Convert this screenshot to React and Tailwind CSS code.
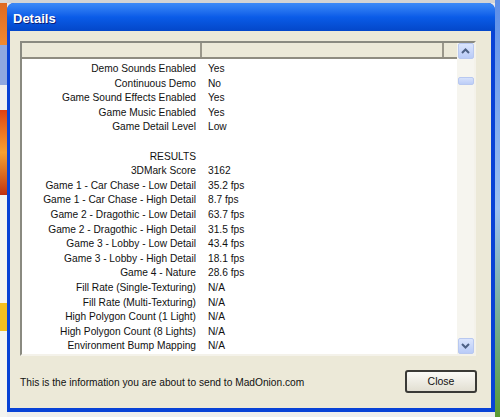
import React from 'react';

const rows = [
  ['Demo Sounds Enabled', 'Yes'],
  ['Continuous Demo', 'No'],
  ['Game Sound Effects Enabled', 'Yes'],
  ['Game Music Enabled', 'Yes'],
  ['Game Detail Level', 'Low'],
  ['', ''],
  ['RESULTS', ''],
  ['3DMark Score', '3162'],
  ['Game 1 - Car Chase - Low Detail', '35.2 fps'],
  ['Game 1 - Car Chase - High Detail', '8.7 fps'],
  ['Game 2 - Dragothic - Low Detail', '63.7 fps'],
  ['Game 2 - Dragothic - High Detail', '31.5 fps'],
  ['Game 3 - Lobby - Low Detail', '43.4 fps'],
  ['Game 3 - Lobby - High Detail', '18.1 fps'],
  ['Game 4 - Nature', '28.6 fps'],
  ['Fill Rate (Single-Texturing)', 'N/A'],
  ['Fill Rate (Multi-Texturing)', 'N/A'],
  ['High Polygon Count (1 Light)', 'N/A'],
  ['High Polygon Count (8 Lights)', 'N/A'],
  ['Environment Bump Mapping', 'N/A'],
];

const ScrollButton = ({ up }) => (
  <div className="w-[16px] h-[16px] rounded-[2px] border border-[#b8c8f0] bg-gradient-to-b from-[#dbe5fd] to-[#b9cbf7] flex items-center justify-center">
    <svg width="9" height="6" viewBox="0 0 9 6">
      <path
        d={up ? 'M1 5 L4.5 1.5 L8 5' : 'M1 1 L4.5 4.5 L8 1'}
        fill="none"
        stroke="#4d6185"
        strokeWidth="2"
      />
    </svg>
  </div>
);

const App = () => {
  return (
    <div
      className="w-[500px] h-[417px] overflow-hidden flex bg-[#e8e8e8]"
      style={{ fontFamily: '"Liberation Sans", Arial, sans-serif' }}
    >
      {/* desktop behind, left */}
      <div className="w-[7px] h-full flex flex-col shrink-0">
        <div className="h-[3px] bg-[#d8d8d8]" />
        <div className="h-[42px] bg-gradient-to-b from-[#e06a20] to-[#f08a30]" />
        <div className="h-[40px] bg-[#8fa8e0]" />
        <div className="h-[25px] bg-[#f0f0f0]" />
        <div className="h-[85px] bg-gradient-to-b from-[#e04010] via-[#f5a030] to-[#c03010]" />
        <div className="h-[108px] bg-[#f4f4f0]" />
        <div className="h-[28px] bg-[#f3c020]" />
        <div className="flex-1 bg-[#f4f4f0]" />
      </div>

      {/* window */}
      <div className="flex flex-col shrink-0 w-[488px]">
        <div className="h-[3px] bg-[#d4d4d4]" />
        <div className="w-[488px] h-[409px] flex flex-col rounded-t-[7px] bg-[#0842d6]">
          {/* title bar */}
          <div className="h-[28px] rounded-t-[7px] bg-gradient-to-b from-[#3d8af7] via-[#0a5ce8] to-[#0447c9] flex items-center pl-[6px] pt-[3px]">
            <span
              className="text-white font-bold text-[13px]"
              style={{ textShadow: '1px 1px 0 #0a1e7a' }}
            >
              Details
            </span>
          </div>

          {/* client */}
          <div className="flex-1 ml-[3px] mr-[4px] mb-[4px] bg-[#ece9d8] flex flex-col pt-[10px] px-[10px]">
            {/* list box */}
            <div className="w-[456px] h-[315px] border-2 border-t-[#8a8a80] border-l-[#8a8a80] border-r-[#f4f2ea] border-b-[#f4f2ea] bg-white flex">
              <div className="flex-1 flex flex-col">
                <div className="h-[16px] flex bg-[#ece9d8] border-b-2 border-[#8f8c80]">
                  <div className="w-[180px] border-r-2 border-[#9a978a]" />
                  <div className="w-[242px] border-r-2 border-[#9a978a]" />
                  <div className="flex-1" />
                </div>
                <div className="flex flex-col pt-[3px] text-[10.2px] text-[#111]">
                  {rows.map(([k, v], i) => (
                    <div key={i} className="flex h-[14.6px] leading-[14.6px]">
                      <div className="w-[180px] text-right pr-[6px] whitespace-nowrap">{k}</div>
                      <div className="pl-[6px] whitespace-nowrap">{v}</div>
                    </div>
                  ))}
                </div>
              </div>
              {/* scrollbar */}
              <div className="w-[17px] bg-[#f6f5ef] flex flex-col items-center">
                <ScrollButton up />
                <div className="mt-[18px] w-[16px] h-[8px] rounded-[2px] border border-[#b8c8f0] bg-gradient-to-b from-[#d6e1fb] to-[#bccdf7]" />
                <div className="flex-1" />
                <ScrollButton />
              </div>
            </div>

            {/* footer */}
            <div className="flex items-center mt-[14px]">
              <div className="text-[10.2px] text-[#111] pt-[3px] whitespace-nowrap">
                This is the information you are about to send to MadOnion.com
              </div>
              <div className="flex-1" />
              <button className="w-[72px] h-[23px] mr-[4px] rounded-[3px] border-2 border-[#3a3a36] bg-gradient-to-b from-[#fafaf6] to-[#e2dfd2] text-[10.5px] text-[#111] leading-none">
                Close
              </button>
            </div>
          </div>
        </div>
        <div className="flex-1 bg-[#eeeeee]" />
      </div>

      {/* desktop behind, right */}
      <div className="flex-1 h-full bg-gradient-to-b from-[#5d8ee8] via-[#9cc0f0] to-[#5a9a30]" />
    </div>
  );
};

export default App;
